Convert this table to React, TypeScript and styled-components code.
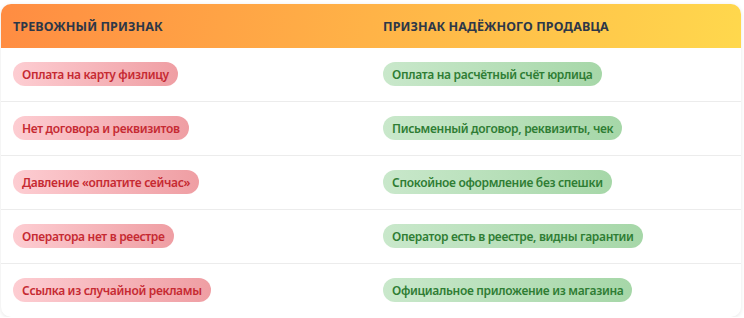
import styled, { createGlobalStyle } from "styled-components";

const GlobalStyle = createGlobalStyle`
  body {
    margin: 0;
    background: #ffffff;
    font-family: "Noto Sans", "Open Sans", "DejaVu Sans", sans-serif;
  }
`;

const Card = styled.div`
  margin: 4px 3px 0 1px;
  border-radius: 10px;
  overflow: hidden;
  background: #ffffff;
  box-shadow: 0 1px 4px rgb(0 0 0 / 10%);
`;

const Grid = styled.div`
  display: grid;
  grid-template-columns: 1fr 1fr;
`;

const HeadCell = styled.div`
  height: 44px;
  display: flex;
  align-items: center;
  padding: 0 12px;
  font-size: 12.5px;
  font-weight: 700;
  letter-spacing: 0.1px;
  text-transform: uppercase;
  color: #2d3748;
`;

const Head = styled.div`
  grid-column: 1 / 3;
  display: grid;
  grid-template-columns: 1fr 1fr;
  background: linear-gradient(100deg, #ff8c42 0%, #ffb347 50%, #ffd84d 100%);
`;

const Cell = styled.div<{ $last: boolean }>`
  padding: 14px 12px 15px;
  border-bottom: ${(p) => (p.$last ? "none" : "1px solid #ececec")};
  display: flex;
  align-items: center;
`;

type Tone = "bad" | "good";

const tones = {
  bad: {
    bg: "linear-gradient(90deg, #fdcdd2 0%, #ef9ea3 100%)",
    color: "#c62a32",
  },
  good: {
    bg: "linear-gradient(90deg, #c9e8cb 0%, #a6d7a8 100%)",
    color: "#2f7d34",
  },
};

const Pill = styled.span<{ $tone: Tone }>`
  display: inline-flex;
  align-items: center;
  height: 24px;
  padding: 0 9px;
  border-radius: 12px;
  font-size: 12px;
  font-weight: 600;
  letter-spacing: -0.32px;
  white-space: nowrap;
  background: ${(p) => tones[p.$tone].bg};
  color: ${(p) => tones[p.$tone].color};
`;

const rows: [string, string][] = [
  ["Оплата на карту физлицу", "Оплата на расчётный счёт юрлица"],
  ["Нет договора и реквизитов", "Письменный договор, реквизиты, чек"],
  ["Давление «оплатите сейчас»", "Спокойное оформление без спешки"],
  ["Оператора нет в реестре", "Оператор есть в реестре, видны гарантии"],
  ["Ссылка из случайной рекламы", "Официальное приложение из магазина"],
];

export default function App() {
  return (
    <>
      <GlobalStyle />
      <Card>
        <Grid>
          <Head>
            <HeadCell>Тревожный признак</HeadCell>
            <HeadCell>Признак надёжного продавца</HeadCell>
          </Head>
          {rows.map(([bad, good], i) => {
            const last = i === rows.length - 1;
            return [
              <Cell key={`b${i}`} $last={last}>
                <Pill $tone="bad">{bad}</Pill>
              </Cell>,
              <Cell key={`g${i}`} $last={last}>
                <Pill $tone="good">{good}</Pill>
              </Cell>,
            ];
          })}
        </Grid>
      </Card>
    </>
  );
}
